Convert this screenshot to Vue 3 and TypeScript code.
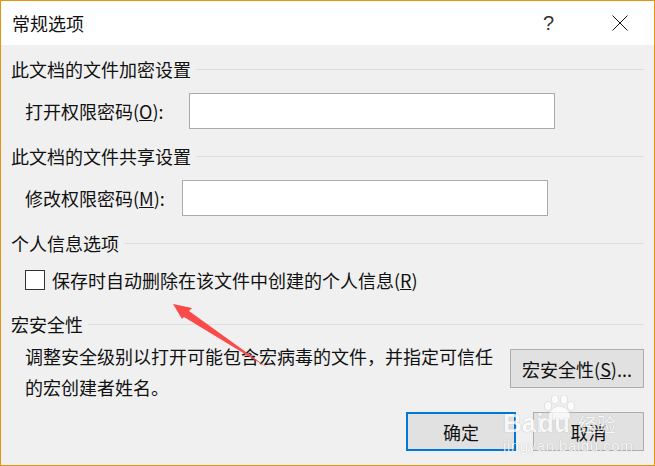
<script setup lang="ts">
const title: string = '常规选项'
</script>

<template>
  <div class="dialog">
    <header class="titlebar">
      <span class="title">{{ title }}</span>
      <span class="help">?</span>
      <svg class="close" width="16" height="16" viewBox="0 0 16 16"><path d="M0.5 0.5L15.5 15.5M15.5 0.5L0.5 15.5" stroke="#111" stroke-width="1" fill="none"/></svg>
    </header>
    <main class="body">
      <div class="heading first"><span>此文档的文件加密设置</span><i></i></div>
      <div class="row"><label class="lab lab-open">打开权限密码(<u>O</u>):</label><div class="input"></div></div>
      <div class="heading"><span>此文档的文件共享设置</span><i></i></div>
      <div class="row"><label class="lab lab-mod">修改权限密码(<u>M</u>):</label><div class="input"></div></div>
      <div class="heading"><span>个人信息选项</span><i></i></div>
      <div class="check-row"><span class="box"></span><span>保存时自动删除在该文件中创建的个人信息(<u>R</u>)</span></div>
      <div class="heading macro"><span>宏安全性</span><i></i></div>
      <div class="desc-row">
        <p class="desc">调整安全级别以打开可能包含宏病毒的文件，并指定可信任的宏创建者姓名。</p>
        <button class="btn macro-btn">宏安全性(<u>S</u>)...</button>
      </div>
      <div class="footer">
        <button class="btn ok">确定</button>
        <button class="btn cancel">取消</button>
      </div>
    </main>
    <svg class="arrow" width="100" height="75" viewBox="0 0 100 75"><polygon points="1,3 20,7 17,10 96,67 12,16 10,18" fill="#fb4a4a"/></svg>
    <div class="watermark">
      <svg class="paw" width="35" height="26" viewBox="0 0 35 26"><g fill="#fff" stroke="#c8c8c8" stroke-width=".6"><ellipse cx="6" cy="11" rx="3.5" ry="4.5"/><ellipse cx="13" cy="4.5" rx="3.5" ry="4.5"/><ellipse cx="22" cy="4.5" rx="3.5" ry="4.5"/><ellipse cx="29" cy="11" rx="3.5" ry="4.5"/><path d="M17.5 11c-6 0-11 6-11 11 0 3 5 4 11 3 6 1 11 0 11-3 0-5-5-11-11-11z"/></g></svg>
      <span class="wm-bai">Bai</span><span class="wm-du">du</span><span class="wm-jy">经验</span>
      <span class="wm-url">jingyan.baidu.com</span>
    </div>
  </div>
</template>

<style scoped>
.dialog {
  position: relative;
  width: 655px;
  height: 466px;
  box-sizing: border-box;
  border: 1px solid #e8930c;
  background: #f0f0f0;
  overflow: hidden;
  font-family: "Noto Sans CJK SC", "Liberation Sans", sans-serif;
  font-size: 18px;
  color: #111;
}
.titlebar {
  height: 44px;
  background: #fff;
  display: flex;
  align-items: center;
  padding-left: 11px;
  line-height: 24px;
}
.title { flex: 1; }
.help {
  font-family: "Liberation Sans", sans-serif;
  font-size: 20px;
  color: #333;
  margin-right: 58px;
}
.close { margin-right: 26px; }
.body { padding: 0 10px 0 10px; }
.heading {
  height: 24px;
  line-height: 24px;
  display: flex;
  align-items: center;
  gap: 5px;
  margin-top: 15px;
}
.heading.first { margin-top: 12px; }
.heading.macro { margin-top: 22px; }
.heading i { flex: 1; height: 1px; background: #dcdcdc; }
.row {
  display: flex;
  align-items: center;
  margin-top: 12px;
  padding-left: 14px;
  height: 36px;
}
.lab { display: block; white-space: nowrap; }
.lab-open { width: 164px; }
.lab-mod { width: 157px; }
.input {
  width: 366px;
  height: 36px;
  box-sizing: border-box;
  background: #fff;
  border: 1px solid #ababab;
}
.check-row {
  display: flex;
  align-items: center;
  margin-top: 15px;
  padding-left: 14px;
  height: 20px;
  gap: 7px;
  line-height: 20px;
  white-space: nowrap;
}
.box {
  width: 20px;
  height: 20px;
  box-sizing: border-box;
  background: #fff;
  border: 1px solid #333;
}
.desc-row {
  display: flex;
  align-items: flex-start;
  justify-content: space-between;
  margin-top: 5px;
  height: 62px;
}
.desc {
  margin: 0 0 0 14px;
  width: 476px;
  line-height: 31px;
}
.btn {
  display: block;
  box-sizing: border-box;
  height: 39px;
  padding: 0;
  background: #e1e1e1;
  border: 1px solid #adadad;
  font: inherit;
  line-height: 24px;
  color: #111;
}
.macro-btn { width: 134px; margin-top: 8px; }
.footer {
  display: flex;
  justify-content: flex-end;
  gap: 17px;
  margin-top: 9px;
}
.ok { width: 110px; border: 2px solid #0078d7; }
.cancel { width: 111px; }
.arrow { position: absolute; left: 171px; top: 300px; }
.watermark {
  position: absolute;
  left: 502px;
  top: 392px;
  width: 125px;
  height: 64px;
  color: #fff;
  opacity: .75;
  text-shadow: 0 0 1px rgba(0, 0, 0, .35);
  font-family: "Liberation Sans", sans-serif;
}
.watermark span { position: absolute; white-space: nowrap; }
.paw { position: absolute; left: 39px; top: 2px; }
.wm-bai { left: 0; top: 15px; font-size: 26px; font-weight: 700; line-height: 30px; }
.wm-du { left: 35px; top: 15px; font-size: 26px; font-weight: 700; line-height: 30px; }
.wm-jy { left: 75px; top: 18px; font-size: 19px; line-height: 26px; font-family: "Noto Sans CJK SC", sans-serif; }
.wm-url { left: 0; top: 44px; font-size: 15px; line-height: 18px; letter-spacing: .55px; }
</style>
